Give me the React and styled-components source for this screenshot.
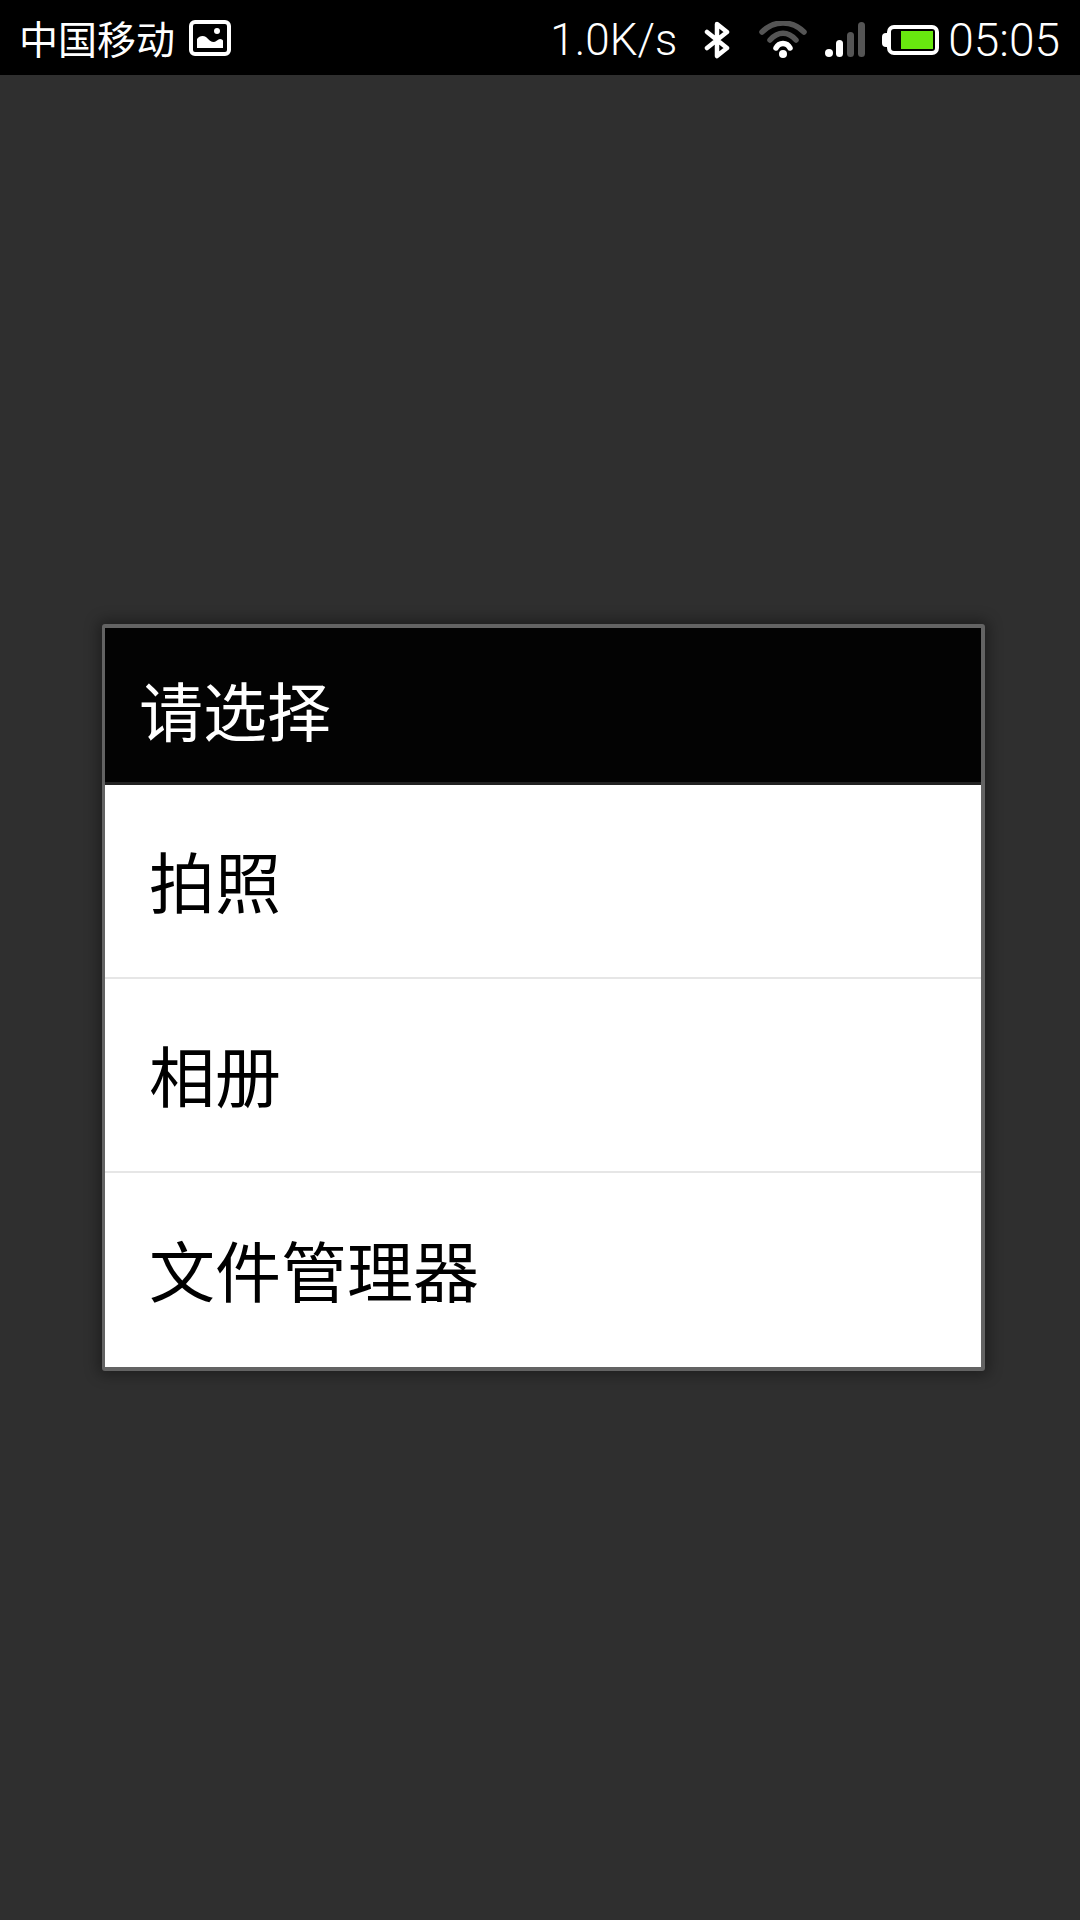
import React from "react";
import styled, { createGlobalStyle } from "styled-components";

const CJK = `"Noto Sans CJK SC", "Noto Sans", sans-serif`;
const Global = createGlobalStyle`
  html, body { margin: 0; padding: 0; background: #2f2f2f; }
  #root { width: 1080px; height: 1920px; }
  * { box-sizing: border-box; }
`;

const Page = styled.div`
  width: 1080px;
  height: 1920px;
  display: flex;
  flex-direction: column;
  background: #2f2f2f;
  overflow: hidden;
`;
const StatusBar = styled.header`
  height: 75px;
  flex: none;
  background: #000;
  color: #fff;
  display: flex;
  align-items: center;
  justify-content: space-between;
  padding: 0 20px 0 19px;
`;
const Group = styled.div`
  display: flex;
  align-items: center;
  padding-top: ${(p) => p.$drop || 0}px;
`;
const Carrier = styled.span`
  font: 400 39px/1 ${CJK};
  margin-right: 14px;
`;
const StatusText = styled.span`
  font: 300 ${(p) => p.$size}px/1 Roboto, "Liberation Sans", sans-serif;
  margin-right: ${(p) => p.$gap || 0}px;
`;
const Icon = styled.svg`
  display: block;
  flex: none;
  margin-right: ${(p) => p.$gap || 0}px;
`;
const Stage = styled.main`
  flex: 1;
  display: flex;
  align-items: center;
  padding-left: 102px;
`;
const Dialog = styled.section`
  width: 883px;
  background: #fff;
  border: solid #636363;
  border-width: 4px 4px 4px 3px;
  border-radius: 3px;
  box-shadow: 0 0 14px 4px rgba(0, 0, 0, 0.35);
`;
const Title = styled.h1`
  margin: 0;
  height: 157px;
  padding: 5px 0 0 34px;
  background: #030303;
  border-bottom: 3px solid #222;
  color: #fff;
  display: flex;
  align-items: center;
  font: 400 64px/1 ${CJK};
`;
const Row = styled.div`
  height: 194px;
  padding: 0 0 5px 44px;
  display: flex;
  align-items: center;
  color: #000;
  font: 400 66px/1 ${CJK};
  border-bottom: ${(p) => (p.$last ? "none" : "2px solid #e6e6e6")};
`;

const PictureIcon = () => (
  <Icon width="42" height="36" viewBox="0 0 42 36">
    <rect x="2" y="2" width="38" height="32" rx="4" fill="none" stroke="#fff" strokeWidth="4" />
    <circle cx="28" cy="11" r="3" fill="#fff" />
    <path d="M8 28V19c2-3 6-4 9-2 3 3 5 5 8 5 2 0 4-3 6-3 2 0 3 1 3 2v7z" fill="#fff" />
  </Icon>
);
const BluetoothIcon = () => (
  <Icon $gap={28} width="28" height="38" viewBox="0 0 28 38">
    <path d="M4 11l20 16-10 8V3l10 8L4 27" fill="none" stroke="#fff" strokeWidth="4.5" strokeLinejoin="round" strokeLinecap="round" />
  </Icon>
);
const WifiIcon = () => (
  <Icon $gap={18} width="48" height="38" viewBox="0 0 48 38" fill="none" strokeLinecap="round">
    <path d="M3 11C15-1 33-1 45 11" stroke="#555" strokeWidth="5.500" />
    <path d="M11 19C19 10 29 10 37 19" stroke="#555" strokeWidth="5.500" />
    <path d="M17 27C20 21 28 21 31 27" stroke="#fff" strokeWidth="5.500" />
    <circle cx="24" cy="33" r="4" fill="#fff" />
  </Icon>
);
const SignalIcon = () => (
  <Icon $gap={16} width="41" height="35" viewBox="0 0 41 35">
    <rect x="0" y="27" width="8" height="8" rx="4" fill="#fff" />
    <rect x="11" y="18" width="7" height="17" rx="3.500" fill="#fff" />
    <rect x="22" y="10" width="7" height="25" rx="3.500" fill="#555" />
    <rect x="33" y="0" width="7" height="35" rx="3.500" fill="#555" />
  </Icon>
);
const BatteryIcon = () => (
  <Icon $gap={9} width="57" height="30" viewBox="0 0 57 30">
    <path d="M6 8H4a4 4 0 0 0-4 4v6a4 4 0 0 0 4 4h2z" fill="#fff" />
    <rect x="7" y="2" width="48" height="26" rx="5" fill="none" stroke="#fff" strokeWidth="4" />
    <rect x="19" y="6" width="32" height="18" fill="#68e80f" />
  </Icon>
);

export default function App() {
  return (
    <Page>
      <Global />
      <StatusBar>
        <Group>
          <Carrier>中国移动</Carrier>
          <PictureIcon />
        </Group>
        <Group $drop={4}>
          <StatusText $size={44} $gap={26}>1.0K/s</StatusText>
          <BluetoothIcon />
          <WifiIcon />
          <SignalIcon />
          <BatteryIcon />
          <StatusText $size={46}>05:05</StatusText>
        </Group>
      </StatusBar>
      <Stage>
        <Dialog>
          <Title>请选择</Title>
          <Row>拍照</Row>
          <Row>相册</Row>
          <Row $last>文件管理器</Row>
        </Dialog>
      </Stage>
    </Page>
  );
}
